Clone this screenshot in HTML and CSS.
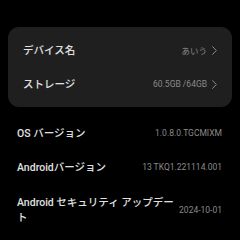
FILE: index.html
```html
<!DOCTYPE html>
<html lang="ja">
<head>
<meta charset="utf-8">
<link rel="stylesheet" href="styles.css">
</head>
<body>
<div class="card">
  <div class="row">
    <span class="label">デバイス名</span>
    <span class="value">あいう</span>
    <svg class="chev" width="5" height="9" viewBox="0 0 5 9"><polyline points="0.6,0.6 4.3,4.5 0.6,8.4" fill="none" stroke="#8a8a8a" stroke-width="1" stroke-linecap="round" stroke-linejoin="round"/></svg>
  </div>
  <div class="row">
    <span class="label">ストレージ</span>
    <span class="value">60.5GB /64GB</span>
    <svg class="chev" width="5" height="9" viewBox="0 0 5 9"><polyline points="0.6,0.6 4.3,4.5 0.6,8.4" fill="none" stroke="#8a8a8a" stroke-width="1" stroke-linecap="round" stroke-linejoin="round"/></svg>
  </div>
</div>
<div class="list">
  <div class="item">
    <span class="label">OS バージョン</span>
    <span class="value">1.0.8.0.TGCMIXM</span>
  </div>
  <div class="item">
    <span class="label">Androidバージョン</span>
    <span class="value">13 TKQ1.221114.001</span>
  </div>
  <div class="item tall">
    <span class="label wrap">Android セキュリティ アップデート</span>
    <span class="value">2024-10-01</span>
  </div>
</div>
</body>
</html>
```
FILE: styles.css
```css
html, body {
  margin: 0;
  padding: 0;
  background: #000;
  width: 240px;
  height: 240px;
  overflow: hidden;
  font-family: Roboto, "Noto Sans CJK JP", sans-serif;
}
.card {
  margin: 27px 8px 0;
  padding: 6px 15px;
  background: #1f1f1f;
  border-radius: 11px;
}
.row {
  display: flex;
  align-items: center;
  height: 34px;
}
.label {
  flex: 1;
  color: #e0e0e0;
  font-size: 10.5px;
  font-weight: 500;
  line-height: 15px;
}
.label.wrap {
  line-break: anywhere;
}
.value {
  color: #8a8a8a;
  font-size: 8.5px;
  white-space: nowrap;
}
.chev {
  margin-left: 5px;
  display: block;
}
.list {
  padding: 9px 18px 0 17px;
}
.item {
  display: flex;
  align-items: center;
  min-height: 34px;
}
.item .value {
  margin-left: 8px;
}
.item.tall {
  padding: 9px 0;
}
.item.tall .value {
  margin-left: 5px;
}
```
